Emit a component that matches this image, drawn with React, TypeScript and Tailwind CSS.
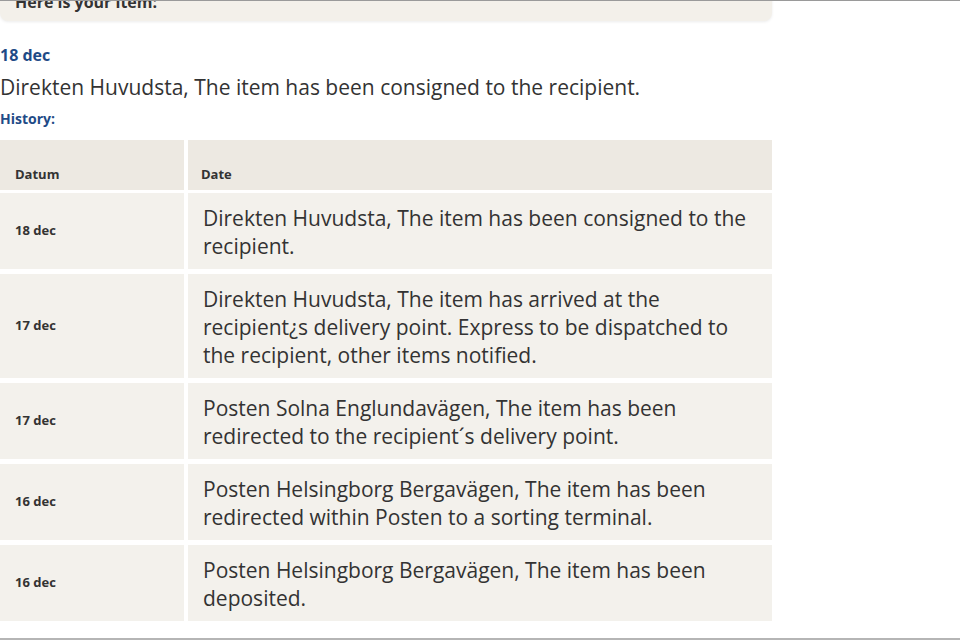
import React from "react";

const rows: { date: string; text: string }[] = [
  { date: "18 dec", text: "Direkten Huvudsta, The item has been consigned to the recipient." },
  {
    date: "17 dec",
    text: "Direkten Huvudsta, The item has arrived at the recipient¿s delivery point. Express to be dispatched to the recipient, other items notified.",
  },
  { date: "17 dec", text: "Posten Solna Englundavägen, The item has been redirected to the recipient´s delivery point." },
  { date: "16 dec", text: "Posten Helsingborg Bergavägen, The item has been redirected within Posten to a sorting terminal." },
  { date: "16 dec", text: "Posten Helsingborg Bergavägen, The item has been deposited." },
];

export default function App() {
  return (
    <div
      className="relative h-[640px] w-[960px] overflow-hidden bg-white text-[#333]"
      style={{ fontFamily: '"Open Sans", sans-serif' }}
    >
      <div className="absolute left-0 right-0 top-0 h-px bg-[#9a9a9a]" />
      <div className="w-[772px]">
        <div className="-mt-[7px] h-[28px] rounded-b-[8px] bg-[#f3f0ea] px-[15px] shadow-[0_1px_3px_rgba(0,0,0,0.08)]">
          <div className="text-[16px] font-bold leading-[18px] text-[#333]">Here is your item:</div>
        </div>
        <div className="mt-[24px] text-[16px] font-bold leading-[20px] text-[#1f4b87]">18 dec</div>
        <div className="mt-[9px] text-[21px] leading-[26px] text-[#333]">
          Direkten Huvudsta, The item has been consigned to the recipient.
        </div>
        <div className="mt-[10px] text-[14px] font-bold leading-[18px] text-[#1f4b87]">History:</div>
        <div className="mt-[12px] grid grid-cols-[184px_1fr] gap-x-[4px]">
          <div className="flex h-[50px] items-end bg-[#ede9e2] px-[15px] pb-[6px] text-[13px] font-bold text-[#333]">Datum</div>
          <div className="flex h-[50px] items-end bg-[#ede9e2] px-[13px] pb-[6px] text-[13px] font-bold text-[#333]">Date</div>
        </div>
        <div className="mt-[3px] flex flex-col gap-[5px]">
          {rows.map((r, i) => (
            <div key={i} className="grid grid-cols-[184px_1fr] gap-x-[4px]">
              <div className="flex items-center bg-[#f3f1ec] px-[15px] text-[13px] font-bold text-[#333]">{r.date}</div>
              <div className="bg-[#f3f1ec] pb-[9px] pl-[15px] pr-[14px] pt-[11px] text-[21px] leading-[28px] text-[#333]">{r.text}</div>
            </div>
          ))}
        </div>
      </div>
      <div className="absolute bottom-0 left-0 right-0 h-[2px] bg-[#b5b5b5]" />
    </div>
  );
}
